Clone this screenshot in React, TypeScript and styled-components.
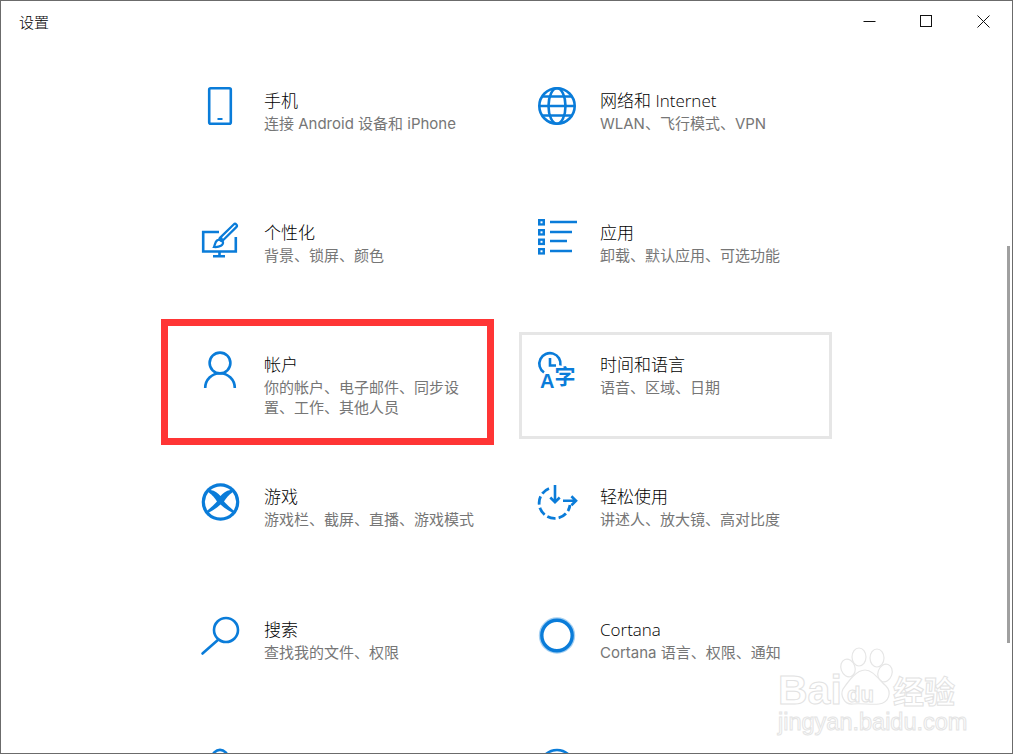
import React from "react";
import styled, { createGlobalStyle } from "styled-components";

const BLUE = "#0a7cd9";

const Global = createGlobalStyle`
  html, body { margin: 0; padding: 0; background: #fff; overflow: hidden; }
  * { box-sizing: border-box; }
`;

const Win = styled.div`
  position: relative;
  width: 1013px;
  height: 754px;
  background: #fff;
  border: 1px solid #6b6b6b;
  overflow: hidden;
  display: flex;
  flex-direction: column;
  font-family: "Open Sans", "Noto Sans CJK SC", sans-serif;
`;

const TitleBar = styled.header`
  flex: 0 0 40px;
  display: flex;
  align-items: center;
  justify-content: space-between;
  padding-left: 18px;
`;

const AppName = styled.span`
  font-size: 15px;
  font-weight: 300;
  color: #000;
`;

const Controls = styled.div`
  display: flex;
  height: 100%;
`;

const Ctl = styled.div`
  width: 57px;
  height: 100%;
  display: flex;
  align-items: center;
  justify-content: center;
`;

const Content = styled.main`
  flex: 1;
  min-height: 0;
  padding: 26.5px 0 0 182px;
  display: grid;
  grid-template-columns: 313px 313px;
  grid-auto-rows: 107px;
  column-gap: 23px;
  row-gap: 25.25px;
`;

const Tile = styled.div<{ $focus?: boolean }>`
  display: flex;
  gap: 24px;
  padding: 16px;
  border: 3px solid ${(p) => (p.$focus ? "#e6e6e6" : "transparent")};
`;

const IconBox = styled.div`
  flex: 0 0 38px;
  width: 38px;
  height: 38px;
`;

const Text = styled.div`
  width: 216px;
  padding-top: 2px;
`;

const Title = styled.div`
  font-size: 17px;
  font-weight: 300;
  line-height: 24px;
  color: #000;
`;

const Sub = styled.div`
  font-family: Inter, "Noto Sans CJK SC", sans-serif;
  font-size: 15px;
  font-weight: 400;
  line-height: 20.4px;
  margin-top: 1px;
  color: #767676;
`;

const RedFrame = styled.div`
  position: absolute;
  left: 160px;
  top: 318px;
  width: 333px;
  height: 126px;
  border: 7px solid #ff3535;
`;

const Thumb = styled.div`
  position: absolute;
  left: 1006px;
  top: 245px;
  width: 3px;
  height: 397px;
  background: #a0a0a0;
`;

const WatermarkSvg = styled.svg`
  position: absolute;
  left: 772px;
  top: 642px;
`;

const S = { fill: "none", stroke: BLUE, strokeWidth: 2.6 } as const;
const Svg: React.FC<{ children: React.ReactNode }> = ({ children }) => (
  <svg width="38" height="38" viewBox="0 0 38 38" style={{ overflow: "visible" }}>
    {children}
  </svg>
);

const Phone = () => (
  <Svg>
    <rect x="7.2" y="1.2" width="21.6" height="35.6" rx="1.5" {...S} />
    <rect x="15.5" y="31" width="5" height="2" fill={BLUE} />
  </Svg>
);
const Globe = () => (
  <Svg>
    <circle cx="19" cy="19" r="17.7" {...S} />
    <ellipse cx="19" cy="19" rx="8.5" ry="17.7" {...S} />
    <path d="M1.5 19H36.5M4 9.5H34M4 28.5H34" {...S} />
  </Svg>
);
const Brush = () => (
  <Svg>
    <path d="M17 13H1.2V32.5H33.8V18" {...S} />
    <path d="M17.5 33V37M11 37.2H23" {...S} />
    <path d="M33 6.8L19.5 20" fill="none" stroke={BLUE} strokeWidth="6" strokeLinecap="round" />
    <path d="M33 6.8L21 18.6" fill="none" stroke="#fff" strokeWidth="1.5" strokeLinecap="round" />
    <path d="M12 28C13 26 13 23 15 21.5C17 20 20 21 21 23C21.5 26 18 28.5 12 28Z" {...S} strokeWidth="2.2" />
  </Svg>
);
const AppsIcon = () => (
  <Svg>
    {[0, 10, 19.5, 29].map((y) => (
      <g key={y}>
        <rect x="0" y={y} width="7" height="6.6" fill={BLUE} />
        <rect x="2.5" y={y + 2.3} width="2" height="2" fill="#fff" />
      </g>
    ))}
    <path d="M12 3H39M12 13H34M12 22H29M12 32H34" {...S} />
  </Svg>
);
const Person = () => (
  <Svg>
    <circle cx="18" cy="12" r="10.4" {...S} />
    <path d="M3.2 37A14.8 14.8 0 0 1 32.8 37" {...S} />
  </Svg>
);
const TimeLang = () => (
  <Svg>
    <path d="M6 21.5A10.6 10.6 0 1 1 22.4 14.5" {...S} />
    <path d="M12 7V14.5H18" {...S} />
    <text x="2" y="37" fontFamily="Liberation Sans" fontWeight="700" fontSize="20" fill={BLUE}>
      A
    </text>
    <text x="16.5" y="32.5" fontFamily="Noto Sans CJK SC" fontWeight="700" fontSize="21" fill={BLUE}>
      字
    </text>
  </Svg>
);
const Xbox = () => (
  <Svg>
    <circle cx="18.5" cy="19" r="18.8" fill={BLUE} />
    <g fill="#fff">
      <path d="M8.6 7A15.6 15.6 0 0 1 28.4 7C24 7.8 21 10 18.5 13C16 10 13 7.8 8.6 7Z" />
      <path d="M6.4 9.2C10 11.5 13 15 15 18.5C12 21.5 8.5 25 5.4 27.5A15.6 15.6 0 0 1 6.4 9.2Z" />
      <path d="M30.6 9.2C27 11.5 24 15 22 18.5C25 21.5 28.5 25 31.6 27.5A15.6 15.6 0 0 0 30.6 9.2Z" />
      <path d="M7 29.5C10.5 27.5 15 25 18.5 21.5C22 25 26.5 27.5 30 29.5A15.6 15.6 0 0 1 7 29.5Z" />
    </g>
  </Svg>
);
const Ease = () => (
  <Svg>
    <path
      d="M11 5.5A15.5 15.5 0 1 0 32 22"
      fill="none"
      stroke={BLUE}
      strokeWidth="2.8"
      strokeDasharray="8.5 3.2"
    />
    <path d="M17 2V19M12.3 14.5L17 19.2L21.7 14.5M25 17.7H38M33.4 13.2L38 17.7L33.4 22.2" {...S} />
  </Svg>
);
const Search = () => (
  <Svg>
    <circle cx="24" cy="14" r="12" {...S} />
    <path d="M15.3 24.5L0.5 37.5" {...S} strokeLinecap="round" />
  </Svg>
);
const Cortana = () => (
  <Svg>
    <circle cx="19" cy="19.5" r="17.2" fill="none" stroke="#a5d0f2" strokeWidth="2" />
    <circle cx="19" cy="19.5" r="15.2" fill="none" stroke={BLUE} strokeWidth="3.4" />
  </Svg>
);
const Lock = () => (
  <Svg>
    <path d="M10.4 16V9.5A7.6 7.6 0 0 1 25.6 9.5V16" {...S} />
    <rect x="5" y="16" width="26" height="20" {...S} />
  </Svg>
);
const Sync = () => (
  <Svg>
    <circle cx="19" cy="19" r="17" {...S} />
  </Svg>
);

const items: { title: string; sub: string; icon: React.ReactNode; focus?: boolean }[] = [
  { title: "手机", sub: "连接 Android 设备和 iPhone", icon: <Phone /> },
  { title: "网络和 Internet", sub: "WLAN、飞行模式、VPN", icon: <Globe /> },
  { title: "个性化", sub: "背景、锁屏、颜色", icon: <Brush /> },
  { title: "应用", sub: "卸载、默认应用、可选功能", icon: <AppsIcon /> },
  { title: "帐户", sub: "你的帐户、电子邮件、同步设置、工作、其他人员", icon: <Person /> },
  { title: "时间和语言", sub: "语音、区域、日期", icon: <TimeLang />, focus: true },
  { title: "游戏", sub: "游戏栏、截屏、直播、游戏模式", icon: <Xbox /> },
  { title: "轻松使用", sub: "讲述人、放大镜、高对比度", icon: <Ease /> },
  { title: "搜索", sub: "查找我的文件、权限", icon: <Search /> },
  { title: "Cortana", sub: "Cortana 语言、权限、通知", icon: <Cortana /> },
  { title: "隐私", sub: "位置、相机、麦克风", icon: <Lock /> },
  { title: "更新和安全", sub: "Windows 更新、恢复、备份", icon: <Sync /> },
];

const Watermark = () => (
  <WatermarkSvg width="195" height="95" viewBox="0 0 195 95">
    <g fill="#fff" stroke="#e6e6e6" strokeWidth="1.2">
      <ellipse cx="75" cy="25" rx="7" ry="9" transform="rotate(-20 75 25)" />
      <ellipse cx="86" cy="14" rx="7" ry="9" />
      <ellipse cx="104" cy="15" rx="7" ry="9" />
      <ellipse cx="112" cy="30" rx="7" ry="9" transform="rotate(20 112 30)" />
      <path d="M92 27C100 27 106 37 113 43C119 49 116 60 106 61C98 62 88 60 80 61C71 62 67 52 70 46C75 39 83 27 92 27Z" />
    </g>
    <g fill="#fff" stroke="#e2e2e2" strokeWidth="1" fontFamily="Liberation Sans" fontWeight="700">
      <text x="5" y="61" fontSize="41">Bai</text>
      <text x="74" y="59" fontSize="22">du</text>
      <text x="120" y="60" fontSize="31" fontFamily="Noto Sans CJK SC">经验</text>
      <text x="5" y="87" fontSize="23.5" fontWeight="400" stroke="#e4e4e4">jingyan.baidu.com</text>
    </g>
  </WatermarkSvg>
);

export default function App() {
  return (
    <Win>
      <Global />
      <TitleBar>
        <AppName>设置</AppName>
        <Controls>
          <Ctl>
            <svg width="13" height="13" viewBox="0 0 13 13">
              <path d="M0.5 6.5H12.5" stroke="#111" fill="none" />
            </svg>
          </Ctl>
          <Ctl>
            <svg width="13" height="13" viewBox="0 0 13 13">
              <rect x="0.5" y="0.5" width="11" height="11" stroke="#111" fill="none" />
            </svg>
          </Ctl>
          <Ctl>
            <svg width="13" height="13" viewBox="0 0 13 13">
              <path d="M0.5 0.5L12.5 12.5M12.5 0.5L0.5 12.5" stroke="#111" fill="none" />
            </svg>
          </Ctl>
        </Controls>
      </TitleBar>
      <Content>
        {items.map((it) => (
          <Tile key={it.title} $focus={it.focus}>
            <IconBox>{it.icon}</IconBox>
            <Text>
              <Title>{it.title}</Title>
              <Sub>{it.sub}</Sub>
            </Text>
          </Tile>
        ))}
      </Content>
      <RedFrame />
      <Thumb />
      <Watermark />
    </Win>
  );
}
